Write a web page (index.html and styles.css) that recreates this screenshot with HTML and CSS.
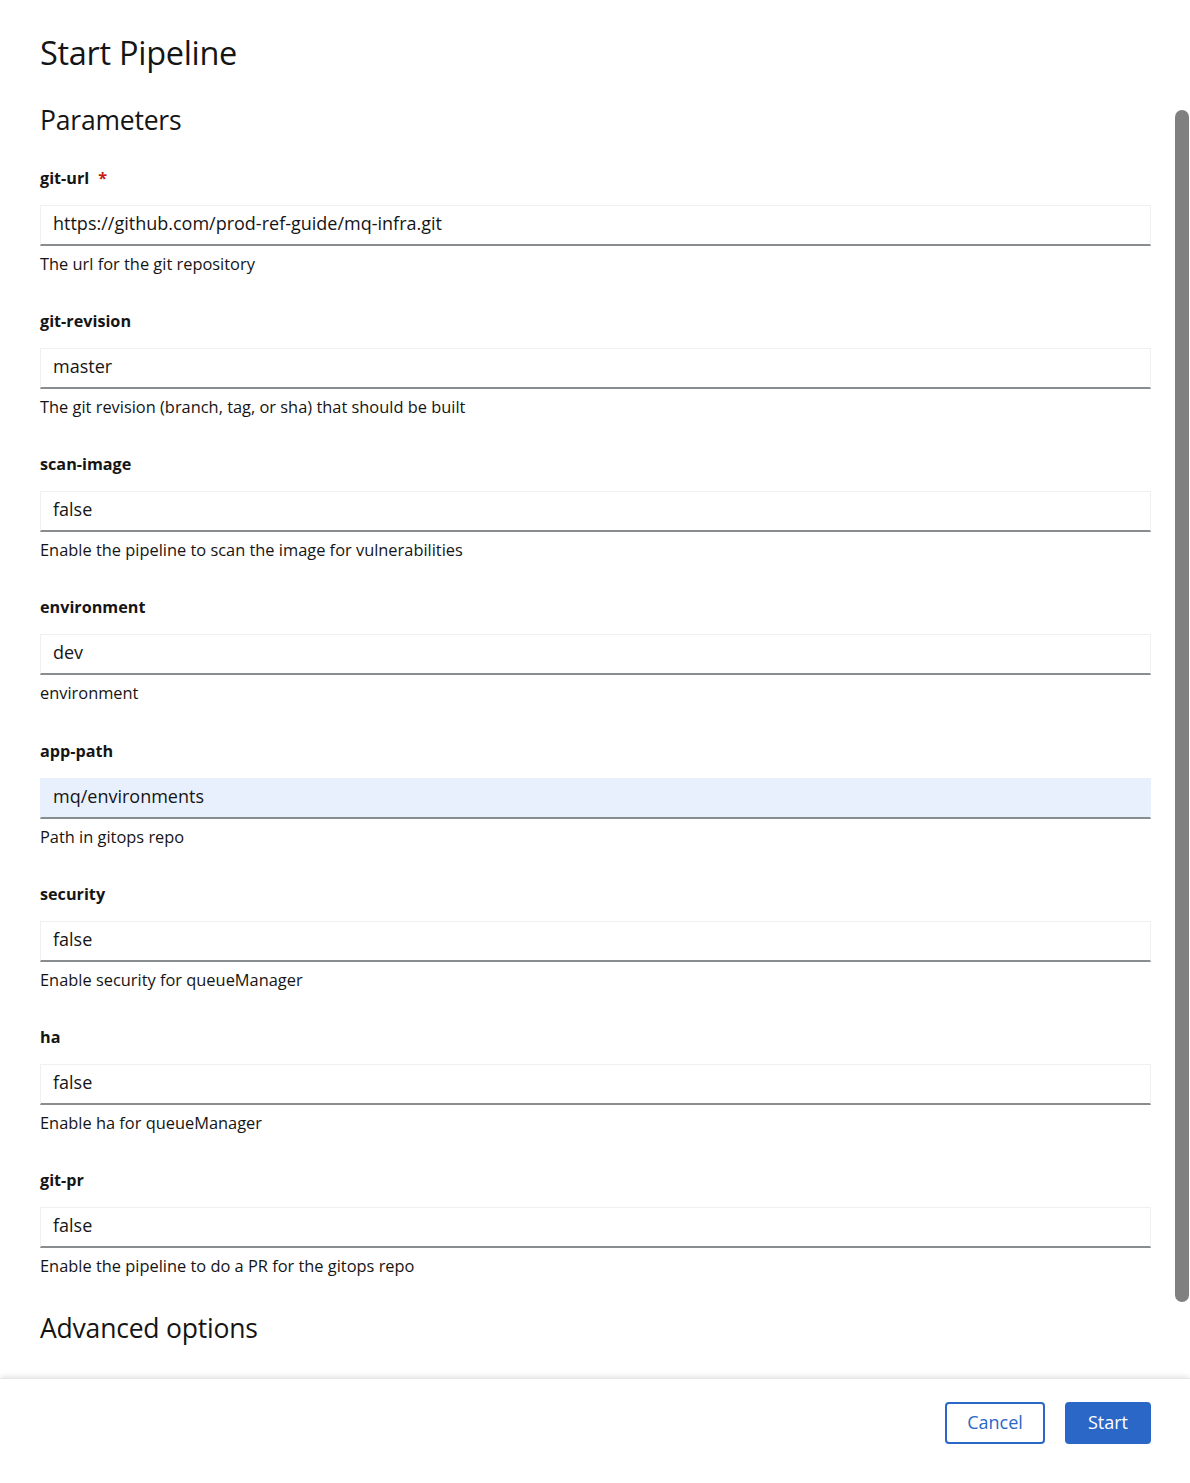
FILE: index.html
```html
<!DOCTYPE html>
<html lang="en">
<head>
<meta charset="utf-8">
<title>Start Pipeline</title>
<link rel="stylesheet" href="styles.css">
</head>
<body>
<div class="modal">
  <header class="modal-header">
    <h1 class="title">Start Pipeline</h1>
  </header>
  <div class="modal-body">
    <h2 class="section-title">Parameters</h2>

    <div class="field">
      <label class="label">git-url<span class="req">*</span></label>
      <div class="input">https://github.com/prod-ref-guide/mq-infra.git</div>
      <div class="helper">The url for the git repository</div>
    </div>

    <div class="field">
      <label class="label">git-revision</label>
      <div class="input">master</div>
      <div class="helper">The git revision (branch, tag, or sha) that should be built</div>
    </div>

    <div class="field">
      <label class="label">scan-image</label>
      <div class="input">false</div>
      <div class="helper">Enable the pipeline to scan the image for vulnerabilities</div>
    </div>

    <div class="field">
      <label class="label">environment</label>
      <div class="input">dev</div>
      <div class="helper">environment</div>
    </div>

    <div class="field">
      <label class="label">app-path</label>
      <div class="input autofill">mq/environments</div>
      <div class="helper">Path in gitops repo</div>
    </div>

    <div class="field">
      <label class="label">security</label>
      <div class="input">false</div>
      <div class="helper">Enable security for queueManager</div>
    </div>

    <div class="field">
      <label class="label">ha</label>
      <div class="input">false</div>
      <div class="helper">Enable ha for queueManager</div>
    </div>

    <div class="field">
      <label class="label">git-pr</label>
      <div class="input">false</div>
      <div class="helper">Enable the pipeline to do a PR for the gitops repo</div>
    </div>

    <h2 class="section-title advanced">Advanced options</h2>
  </div>
  <div class="scroll-thumb"></div>
  <footer class="modal-footer">
    <button class="btn btn-secondary">Cancel</button>
    <button class="btn btn-primary">Start</button>
  </footer>
</div>
</body>
</html>
```

FILE: styles.css
```css
* { box-sizing: border-box; }

html, body {
  margin: 0;
  padding: 0;
  background: #ffffff;
}

body {
  font-family: "Open Sans", "Lato", sans-serif;
  color: #151515;
}

.modal {
  position: relative;
  width: 1190px;
  height: 1483px;
  display: flex;
  flex-direction: column;
  background: #fff;
}

.modal-header {
  padding: 32px 40px 0 40px;
  height: 103px;
  flex: none;
}

.title {
  margin: 0;
  font-size: 32.5px;
  line-height: 42px;
  font-weight: 500;
  letter-spacing: -0.3px;
}

.modal-body {
  flex: 1;
  padding: 0 39px 0 40px;
  overflow: hidden;
}

.section-title {
  margin: 0;
  font-size: 26.5px;
  line-height: 34px;
  font-weight: 500;
  letter-spacing: -0.2px;
}

.field {
  display: flex;
  flex-direction: column;
}

.section-title + .field {
  margin-top: 29px;
}

.field + .field {
  margin-top: 33.15px;
}

.label {
  font-size: 16.2px;
  line-height: 24px;
  font-weight: 700;
}

.req {
  color: #c9190b;
  margin-left: 9px;
  font-weight: 700;
}

.input {
  margin-top: 15px;
  height: 41px;
  border: 1px solid #f0f0f0;
  border-bottom: 2px solid #8a8d90;
  padding: 0 12px 3px 12px;
  font-size: 18px;
  line-height: 35px;
  background: #fff;
}

.input.autofill {
  background: #e8f0fe;
  border-color: #e8f0fe;
  border-bottom-color: #8a8d90;
}

.helper {
  margin-top: 6px;
  font-size: 16.4px;
  line-height: 24px;
}

.advanced {
  margin-top: 33px;
}

.scroll-thumb {
  position: absolute;
  left: 1175px;
  top: 110px;
  width: 14px;
  height: 1192px;
  border-radius: 7px;
  background: #808080;
}

.modal-footer {
  height: 105px;
  flex: none;
  display: flex;
  justify-content: flex-end;
  align-items: flex-start;
  gap: 20px;
  padding: 23px 39px 0 0;
  border-top: 1px solid #e6e6e6;
  box-shadow: 0 -3px 5px -1px rgba(0, 0, 0, 0.10);
  background: #fff;
  position: relative;
}

.btn {
  height: 42px;
  border-radius: 4px;
  font-family: inherit;
  font-size: 18px;
  padding: 0 0 2px 0;
  cursor: pointer;
}

.btn-secondary {
  width: 100px;
  background: #fff;
  color: #2a67c7;
  border: 2px solid #2a67c7;
}

.btn-primary {
  width: 86px;
  background: #2a67c7;
  color: #fff;
  border: none;
}
```
